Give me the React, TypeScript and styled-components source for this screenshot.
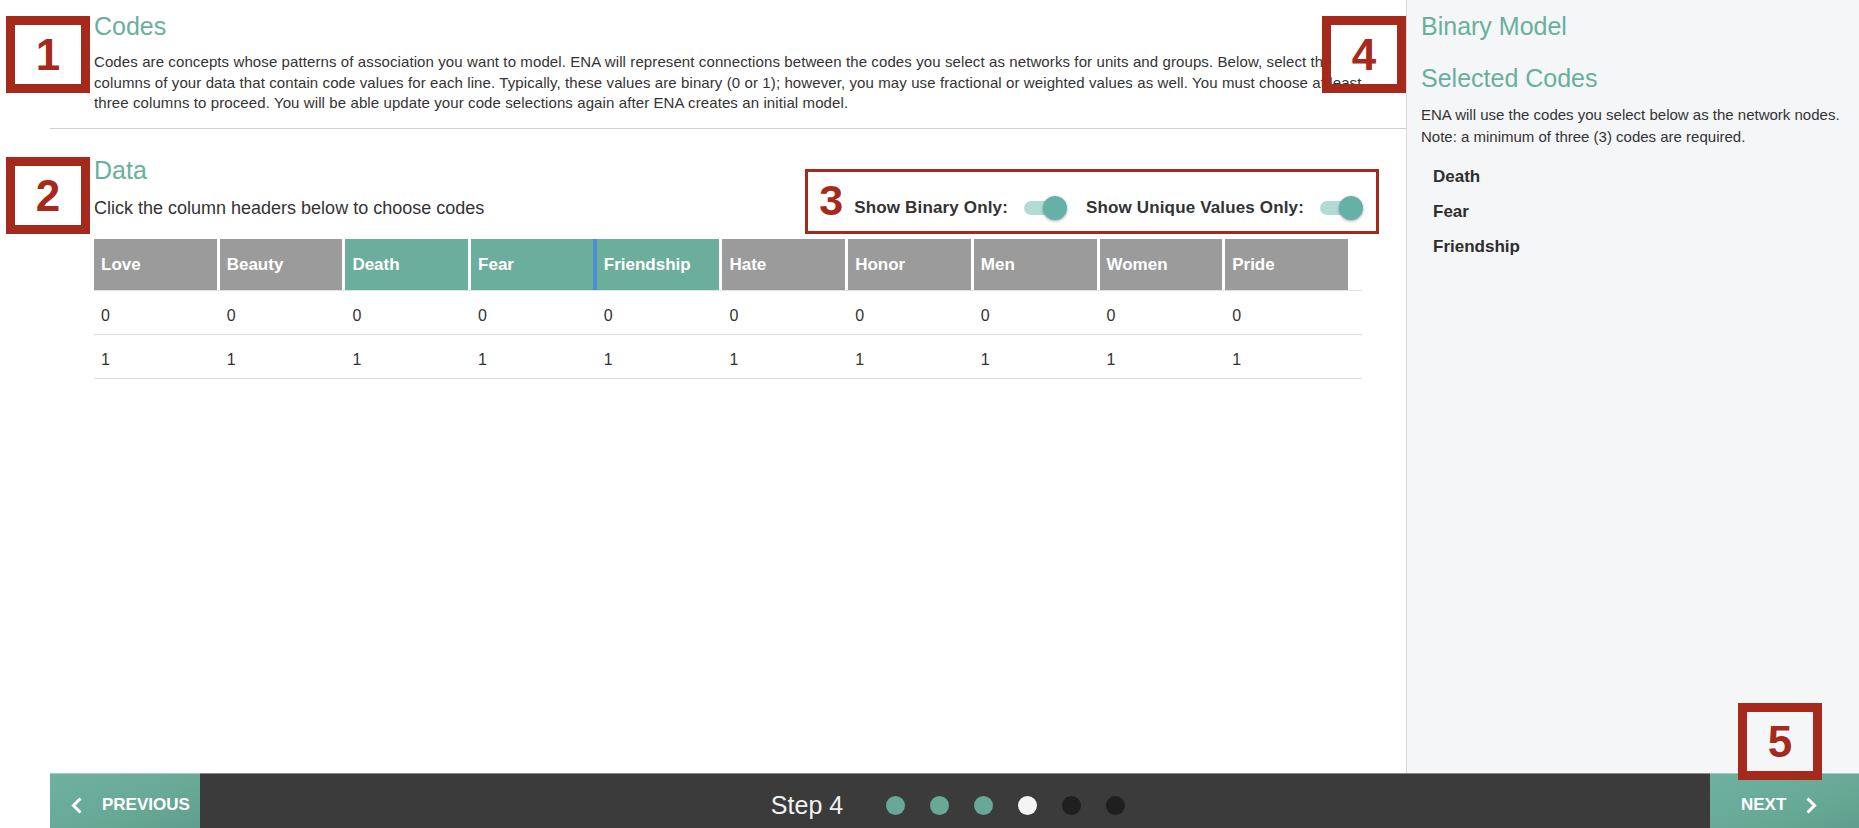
import React from 'react';
import styled, { createGlobalStyle } from 'styled-components';

const GlobalStyle = createGlobalStyle`
  html, body { margin: 0; padding: 0; background: #fff; }
  body { font-family: "Liberation Sans", Arial, Helvetica, sans-serif; color: #333; }
  * { box-sizing: border-box; }
`;

const TEAL = '#68b09c';
const RED = '#a52a1b';

const Page = styled.div`
  position: relative;
  width: 100%;
  height: 828px;
  display: flex;
  flex-direction: column;
  overflow: hidden;
`;

const Body = styled.div`
  display: flex;
  flex: 1;
  min-height: 0;
`;

const Main = styled.main`
  flex: 1;
  min-width: 0;
  padding-left: 50px;
`;

const CodesSection = styled.section`
  padding: 11px 44px 14px;
`;

const Title = styled.h1`
  margin: 0;
  font-size: 25px;
  line-height: 30px;
  font-weight: 400;
  color: ${TEAL};
`;

const Intro = styled.p`
  margin: 11px 0 0;
  font-size: 15px;
  line-height: 20.5px;
  letter-spacing: 0.1px;
  color: #333;
`;

const Divider = styled.hr`
  margin: 0;
  border: 0;
  border-top: 1px solid #cfcfcf;
`;

const DataSection = styled.section`
  padding: 26px 44px 0;
`;

const DataHeader = styled.div`
  display: flex;
  justify-content: space-between;
  align-items: flex-start;
`;

const Lead = styled.p`
  margin: 12px 0 0;
  font-size: 18px;
  line-height: 22px;
  color: #333;
`;

const ToggleBox = styled.div`
  margin-top: 14px;
  margin-right: -17px;
  height: 65px;
  border: 3px solid ${RED};
  padding: 14px 13px 0 11px;
  display: flex;
  align-items: center;
`;

const Numeral = styled.span`
  font-size: 43px;
  line-height: 43px;
  font-weight: 700;
  color: ${RED};
  margin-top: -16px;
  margin-right: 11px;
`;

const ToggleLabel = styled.span<{ $gap?: number }>`
  font-size: 17px;
  line-height: 20px;
  font-weight: 700;
  letter-spacing: 0.15px;
  color: #333;
  margin-left: ${(p) => p.$gap ?? 0}px;
`;

const Switch = styled.span`
  position: relative;
  display: inline-block;
  width: 43px;
  height: 24px;
  margin-left: 16px;
`;

const Track = styled.span`
  position: absolute;
  left: 0;
  top: 5px;
  width: 37px;
  height: 14px;
  border-radius: 7px;
  background: #b2dbd4;
`;

const Knob = styled.span`
  position: absolute;
  right: 0;
  top: 0;
  width: 24px;
  height: 24px;
  border-radius: 50%;
  background: #66b1a7;
  box-shadow: 0 1px 3px rgba(0, 0, 0, 0.35);
`;

const Table = styled.div`
  margin-top: 5px;
`;

const HeadRow = styled.div`
  display: grid;
  grid-template-columns: repeat(10, 125.7px);
  border-bottom: 1px solid #e2e2e2;
`;

const HeadCell = styled.div<{ $selected: boolean; $focused: boolean }>`
  height: 51px;
  display: flex;
  align-items: center;
  padding: 1px 0 0 7px;
  background: ${(p) => (p.$selected ? '#6cae9c' : '#9b9b9b')};
  border-right: ${(p) => (p.$focused ? '4px solid #4a8fd6' : '3px solid #fff')};
  color: #fff;
  font-size: 17px;
  font-weight: 700;
`;

const BodyRow = styled.div`
  display: grid;
  grid-template-columns: repeat(10, 125.7px);
  height: 44px;
  align-items: center;
  padding-top: 7px;
  border-bottom: 1px solid #dedede;
`;

const Cell = styled.div`
  padding-left: 7px;
  font-size: 16px;
  color: #333;
`;

const Sidebar = styled.aside`
  width: 453px;
  flex-shrink: 0;
  background: #f5f6f8;
  border-left: 1px solid #d9d9d9;
  padding: 11px 6px 0 14px;
`;

const SideTitle = styled(Title)<{ $space?: number }>`
  margin-top: ${(p) => p.$space ?? 0}px;
`;

const SideNote = styled.p`
  margin: 11px 0 0;
  font-size: 15px;
  line-height: 21.5px;
  color: #333;
`;

const CodeList = styled.ul`
  list-style: none;
  margin: 12px 0 0;
  padding: 0 0 0 12px;
`;

const CodeItem = styled.li`
  font-size: 17px;
  line-height: 35px;
  font-weight: 700;
  color: #2e2e2e;
`;

const Footer = styled.footer`
  height: 55px;
  margin-left: 50px;
  display: flex;
  background: #3b3b3b;
  box-shadow: inset 0 1px 0 #8a8a8a;
`;

const NavButton = styled.button<{ $w: number; $pl: number }>`
  width: ${(p) => p.$w}px;
  flex-shrink: 0;
  border: 0;
  margin: 0;
  padding: 9px 0 0 ${(p) => p.$pl}px;
  display: flex;
  align-items: center;
  gap: 19px;
  background: linear-gradient(160deg, #6db19f 0%, #68a996 60%, #5f9e8c 100%);
  box-shadow: inset 0 1px 0 #9fcfc2;
  color: #fff;
  font-family: inherit;
  font-size: 17px;
  font-weight: 700;
  text-transform: uppercase;
  cursor: pointer;
`;

const StepArea = styled.div`
  flex: 1;
  display: flex;
  align-items: center;
  justify-content: center;
  padding: 9px 14px 0 0;
`;

const StepText = styled.span`
  font-size: 25px;
  color: #f2f2f2;
  margin-right: 43px;
`;

const Dots = styled.div`
  display: flex;
  gap: 25px;
`;

const Dot = styled.span<{ $state: 'done' | 'current' | 'todo' }>`
  width: 19px;
  height: 19px;
  border-radius: 50%;
  background: ${(p) =>
    p.$state === 'done' ? '#68a897' : p.$state === 'current' ? '#f4f4f4' : '#1f1f1f'};
`;

const Badge = styled.div<{ $x: number; $y: number }>`
  position: absolute;
  left: ${(p) => p.$x}px;
  top: ${(p) => p.$y}px;
  width: 84px;
  height: 77px;
  border: 9px solid ${RED};
  display: flex;
  align-items: center;
  justify-content: center;
  color: ${RED};
  font-size: 44px;
  font-weight: 700;
  line-height: 1;
  pointer-events: none;
`;

const Chevron = ({ dir }: { dir: 'left' | 'right' }) => (
  <svg width="12" height="17" viewBox="0 0 12 17" fill="none">
    <polyline
      points={dir === 'left' ? '9.5,1.5 2.5,8.5 9.5,15.5' : '2.5,1.5 9.5,8.5 2.5,15.5'}
      stroke="#fff"
      strokeWidth="3"
      strokeLinecap="butt"
      strokeLinejoin="miter"
    />
  </svg>
);

const Toggle = () => (
  <Switch>
    <Track />
    <Knob />
  </Switch>
);

const columns = ['Love', 'Beauty', 'Death', 'Fear', 'Friendship', 'Hate', 'Honor', 'Men', 'Women', 'Pride'];
const selected = ['Death', 'Fear', 'Friendship'];
const rows = ['0', '1'];
const steps: Array<'done' | 'current' | 'todo'> = ['done', 'done', 'done', 'current', 'todo', 'todo'];

export default function App() {
  return (
    <Page>
      <GlobalStyle />
      <Body>
        <Main>
          <CodesSection>
            <Title>Codes</Title>
            <Intro>
              Codes are concepts whose patterns of association you want to model. ENA will represent connections
              between the codes you select as networks for units and groups. Below, select the columns of your data
              that contain code values for each line. Typically, these values are binary (0 or 1); however, you may use
              fractional or weighted values as well. You must choose at least three columns to proceed. You will be
              able update your code selections again after ENA creates an initial model.
            </Intro>
          </CodesSection>
          <Divider />
          <DataSection>
            <DataHeader>
              <div>
                <Title>Data</Title>
                <Lead>Click the column headers below to choose codes</Lead>
              </div>
              <ToggleBox>
                <Numeral>3</Numeral>
                <ToggleLabel>Show Binary Only:</ToggleLabel>
                <Toggle />
                <ToggleLabel $gap={19}>Show Unique Values Only:</ToggleLabel>
                <Toggle />
              </ToggleBox>
            </DataHeader>
            <Table>
              <HeadRow>
                {columns.map((c) => (
                  <HeadCell key={c} $selected={selected.includes(c)} $focused={c === 'Fear'}>
                    {c}
                  </HeadCell>
                ))}
              </HeadRow>
              {rows.map((v) => (
                <BodyRow key={v}>
                  {columns.map((c) => (
                    <Cell key={c}>{v}</Cell>
                  ))}
                </BodyRow>
              ))}
            </Table>
          </DataSection>
        </Main>
        <Sidebar>
          <SideTitle>Binary Model</SideTitle>
          <SideTitle $space={22}>Selected Codes</SideTitle>
          <SideNote>
            ENA will use the codes you select below as the network nodes.
            <br />
            Note: a minimum of three (3) codes are required.
          </SideNote>
          <CodeList>
            {selected.map((s) => (
              <CodeItem key={s}>{s}</CodeItem>
            ))}
          </CodeList>
        </Sidebar>
      </Body>
      <Footer>
        <NavButton $w={150} $pl={21}>
          <Chevron dir="left" />
          Previous
        </NavButton>
        <StepArea>
          <StepText>Step 4</StepText>
          <Dots>
            {steps.map((s, i) => (
              <Dot key={i} $state={s} />
            ))}
          </Dots>
        </StepArea>
        <NavButton $w={149} $pl={31}>
          Next
          <Chevron dir="right" />
        </NavButton>
      </Footer>
      <Badge $x={6} $y={16}>1</Badge>
      <Badge $x={6} $y={157}>2</Badge>
      <Badge $x={1322} $y={16}>4</Badge>
      <Badge $x={1738} $y={703}>5</Badge>
    </Page>
  );
}
